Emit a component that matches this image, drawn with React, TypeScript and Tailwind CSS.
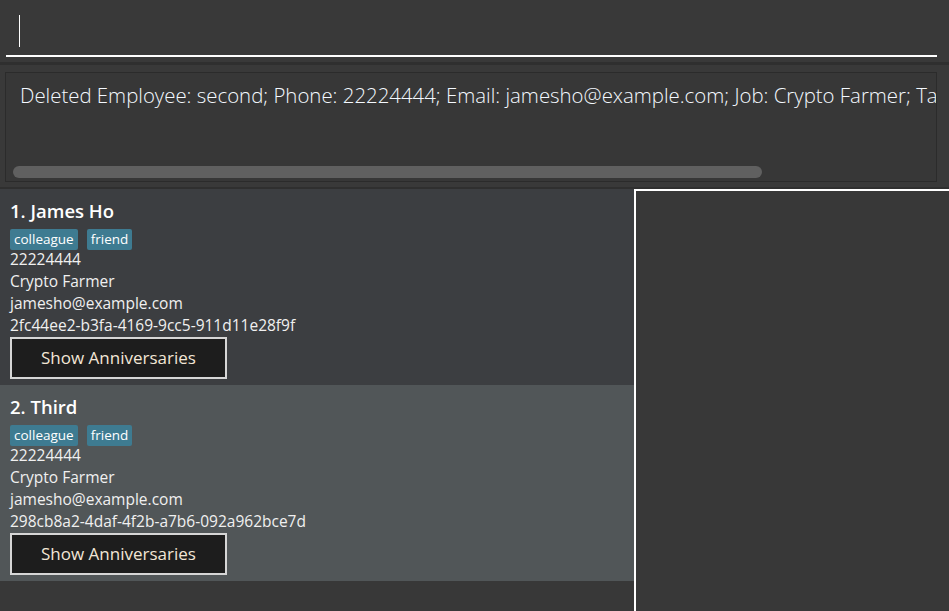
import React from "react";

const font = { fontFamily: '"Open Sans", "Noto Sans", sans-serif' };

function Tag({ label }: { label: string }) {
  return (
    <span className="inline-flex h-[21px] items-center rounded-[2px] bg-[#3e7b91] px-[4px] text-[13.5px] font-normal text-white">
      {label}
    </span>
  );
}

function Card({
  idx,
  name,
  id,
  selected,
}: {
  idx: number;
  name: string;
  id: string;
  selected?: boolean;
}) {
  return (
    <div
      className={
        "flex flex-col pl-[10px] pt-[8px] pb-[6px] " +
        (selected ? "bg-[#515658]" : "bg-[#3c3e41]")
      }
    >
      <div className="flex h-[28px] items-center text-[18.5px] font-semibold text-white">
        {idx}. {name}
      </div>
      <div className="mt-[4px] flex gap-[9px]">
        <Tag label="colleague" />
        <Tag label="friend" />
      </div>
      <div className="-mt-[1px] flex flex-col text-[15.5px] text-[#f0f0f0]">
        <div className="flex h-[22px] items-center">22224444</div>
        <div className="flex h-[22px] items-center">Crypto Farmer</div>
        <div className="flex h-[22px] items-center">jamesho@example.com</div>
        <div className="flex h-[22px] items-center">{id}</div>
      </div>
      <div className="flex h-[42px] w-[217px] items-center justify-center border-2 border-[#d6d6d6] bg-[#1d1d1d] text-[17px] text-[#f2e6d6]">
        Show Anniversaries
      </div>
    </div>
  );
}

export default function App() {
  return (
    <div style={font} className="flex h-[611px] w-[949px] flex-col overflow-hidden bg-[#393939]">
      {/* command box */}
      <div className="flex h-[62px] flex-col px-[6px] pr-[12px]">
        <div className="flex flex-1 items-start pl-[13px] pt-[15px]">
          <div className="h-[32px] w-[1px] bg-white" />
        </div>
        <div className="mb-[5px] h-[2px] bg-white" />
      </div>
      <div className="h-[3px] bg-[#2f2f2f]" />
      {/* result box */}
      <div className="flex px-[5px] pr-[12px] pt-[7px] pb-[5px]">
        <div className="flex h-[110px] flex-1 flex-col overflow-hidden border border-[#2b2b2b] bg-[#373737]">
          <div className="flex h-[38px] items-end whitespace-nowrap pl-[14px] text-[20.4px] font-light text-[#f4f9ff]">
            Deleted Employee: second; Phone: 22224444; Email: jamesho@example.com; Job: Crypto Farmer; Tags: [colleague][friend]
          </div>
          <div className="flex-1" />
          <div className="mb-[3px] ml-[7px] h-[12px] w-[749px] rounded-[6px] bg-[#606060]" />
        </div>
      </div>
      <div className="h-[2px] bg-[#2f2f2f]" />
      {/* main */}
      <div className="flex flex-1">
        <div className="flex w-[634px] flex-col bg-[#383838]">
          <Card idx={1} name="James Ho" id="2fc44ee2-b3fa-4169-9cc5-911d11e28f9f" />
          <Card idx={2} name="Third" id="298cb8a2-4daf-4f2b-a7b6-092a962bce7d" selected />
        </div>
        <div className="flex-1 border-l-2 border-t-2 border-white bg-[#383838]" />
      </div>
    </div>
  );
}
